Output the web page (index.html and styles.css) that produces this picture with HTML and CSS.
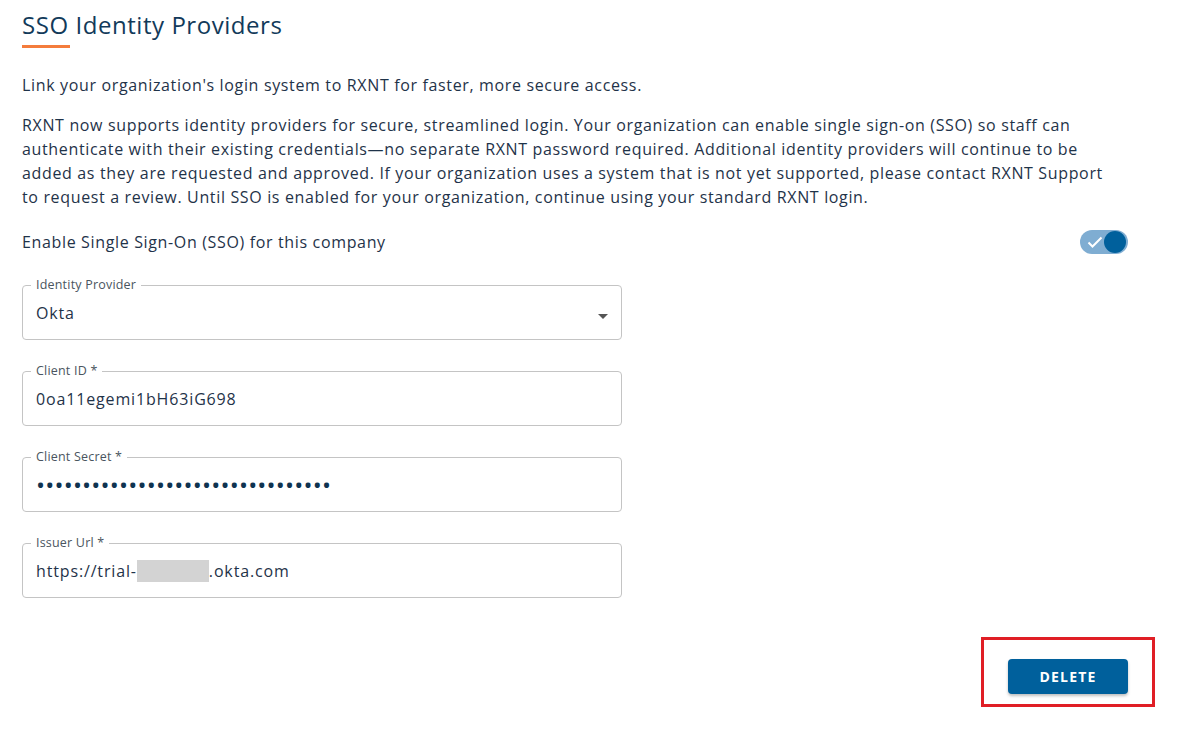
FILE: index.html
```html
<!DOCTYPE html>
<html lang="en">
<head>
    <meta charset="UTF-8">
    <title>SSO Identity Providers</title>
    <link rel="stylesheet" href="styles.css">
</head>
<body>
<div class="page">
    <h2 class="title">SSO Identity Providers</h2>

    <p class="lead">Link your organization's login system to RXNT for faster, more secure access.</p>

    <p class="intro">RXNT now supports identity providers for secure, streamlined login. Your organization can enable single sign-on (SSO) so staff can authenticate with their existing credentials—no separate RXNT password required. Additional identity providers will continue to be added as they are requested and approved. If your organization uses a system that is not yet supported, please contact RXNT Support to request a review. Until SSO is enabled for your organization, continue using your standard RXNT login.</p>

    <div class="toggle-row">
        <span>Enable Single Sign-On (SSO) for this company</span>
        <div class="toggle">
            <svg class="check" width="16" height="12" viewBox="0 0 16 12">
                <path d="M1.5 6.5 L5.5 10.5 L14.5 1.5" fill="none" stroke="#fff" stroke-width="2"/>
            </svg>
            <div class="thumb"></div>
        </div>
    </div>

    <div class="fields">
        <fieldset class="field">
            <legend>Identity Provider</legend>
            <div class="value">Okta</div>
            <span class="caret"></span>
        </fieldset>

        <fieldset class="field">
            <legend>Client ID *</legend>
            <div class="value">0oa11egemi1bH63iG698</div>
        </fieldset>

        <fieldset class="field">
            <legend>Client Secret *</legend>
            <div class="value dots">••••••••••••••••••••••••••••••••</div>
        </fieldset>

        <fieldset class="field">
            <legend>Issuer Url *</legend>
            <div class="value">https://trial-<span class="redacted"></span>.okta.com</div>
        </fieldset>
    </div>

    <div class="actions">
        <div class="highlight">
            <button class="btn-delete">DELETE</button>
        </div>
    </div>
</div>
</body>
</html>
```

FILE: styles.css
```css
body {
    font-family: 'Open Sans', 'Noto Sans', sans-serif;
    color: #1f3349;
    background: #fff;
    margin: 0;
    padding: 0;
}

.page {
    width: 1106px;
    padding: 10px 0 0 22px;
}

.title {
    font-size: 24px;
    font-weight: 400;
    color: #123a5a;
    letter-spacing: 0.55px;
    margin: 0;
    padding-bottom: 8px;
    line-height: 30px;
}

.title::after {
    content: "";
    display: block;
    width: 48px;
    height: 3px;
    background: #f47c3c;
    margin-top: 5px;
}

.lead {
    font-size: 16px;
    letter-spacing: 0.65px;
    line-height: 24px;
    margin: 17px 0 16px;
}

.intro {
    max-width: 1098px;
    font-size: 16px;
    letter-spacing: 0.65px;
    line-height: 24px;
    margin: 0 0 20px;
}

.toggle-row {
    display: flex;
    justify-content: space-between;
    align-items: center;
    font-size: 16px;
    letter-spacing: 0.65px;
    height: 26px;
}

.toggle {
    width: 48px;
    height: 24px;
    border-radius: 12px;
    background: #7fadd2;
    position: relative;
}

.check {
    position: absolute;
    left: 7px;
    top: 6px;
}

.thumb {
    position: absolute;
    right: 2px;
    top: 1px;
    width: 22px;
    height: 22px;
    border-radius: 50%;
    background: #00609c;
}

.fields {
    display: flex;
    flex-direction: column;
    gap: 24px;
    margin-top: 23px;
    width: 600px;
}

.field {
    position: relative;
    margin: 0;
    padding: 0 13px;
    border: 1px solid #c4c4c4;
    border-radius: 4px;
    height: 62px;
    box-sizing: border-box;
}

.field legend {
    font-size: 12.5px;
    color: #4a5560;
    padding: 0 5px;
    margin-left: -5px;
    line-height: 14px;
    letter-spacing: 0.2px;
}

.value {
    font-size: 16px;
    letter-spacing: 0.85px;
    line-height: 24px;
    padding-top: 9px;
}

.dots {
    font-size: 24px;
    letter-spacing: 0.2px;
    color: #0f3350;
    line-height: 24px;
}

.redacted {
    display: inline-block;
    width: 72px;
    height: 22px;
    background: #d3d3d3;
    vertical-align: -5px;
}

.caret {
    position: absolute;
    right: 13px;
    top: 22px;
    border-left: 5px solid transparent;
    border-right: 5px solid transparent;
    border-top: 5px solid #555;
}

.actions {
    display: flex;
    justify-content: flex-end;
    margin-top: 39px;
    margin-right: -27px;
}

.highlight {
    border: 3px solid #e01e25;
    padding: 19px 24px 10px 24px;
    width: 120px;
}

.btn-delete {
    width: 120px;
    height: 35px;
    background: #00609c;
    color: #fff;
    border: none;
    border-radius: 4px;
    font-family: 'Open Sans', sans-serif;
    font-weight: 700;
    font-size: 14px;
    letter-spacing: 1.2px;
    box-shadow: 0 2px 3px rgba(0,0,0,0.25);
    cursor: pointer;
}
```
